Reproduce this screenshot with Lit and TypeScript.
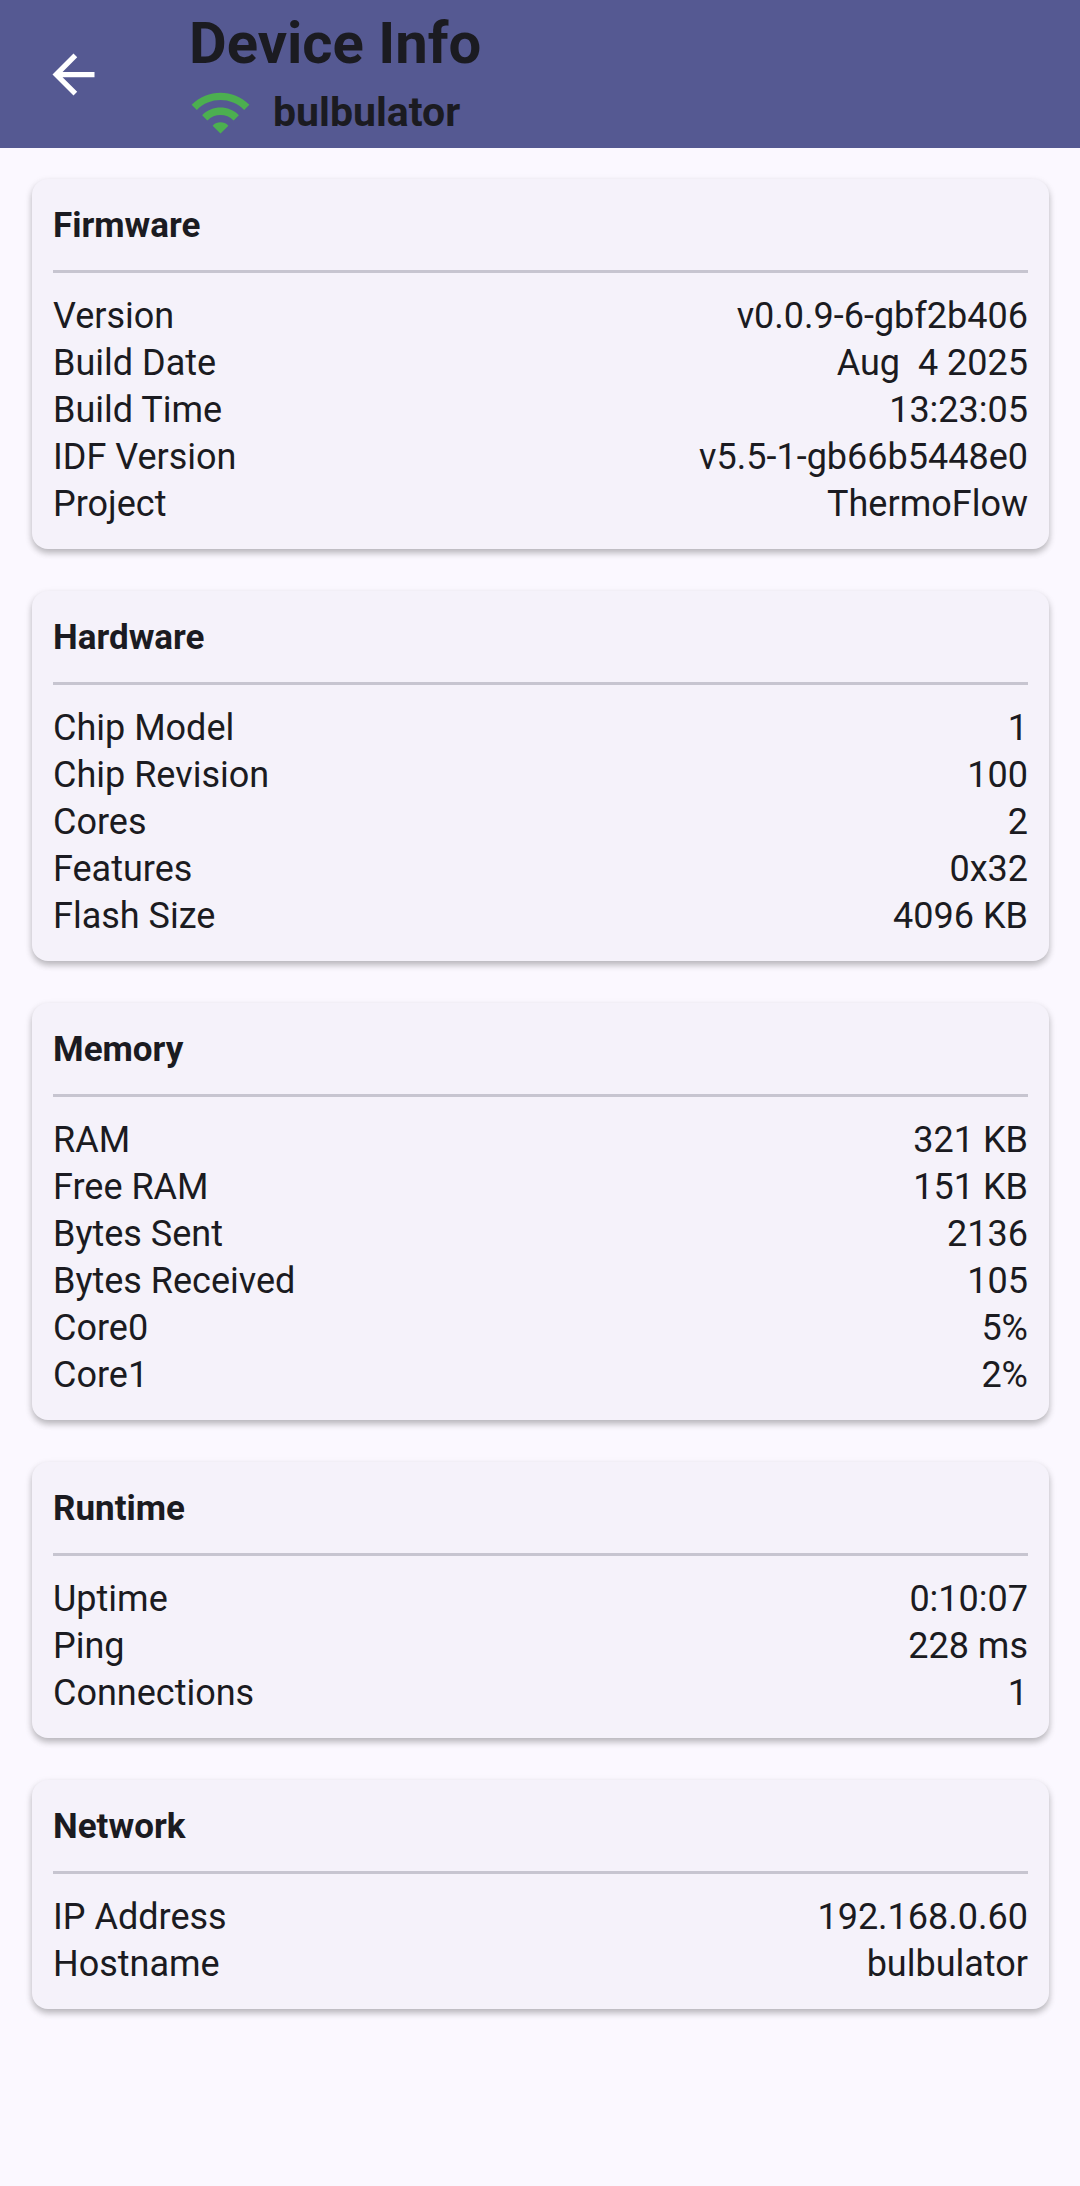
import { LitElement, html, css } from "lit";
import { customElement, property } from "lit/decorators.js";

interface InfoRow {
  label: string;
  value: string;
}

interface InfoSection {
  title: string;
  rows: InfoRow[];
}

const sections: InfoSection[] = [
  {
    title: "Firmware",
    rows: [
      { label: "Version", value: "v0.0.9-6-gbf2b406" },
      { label: "Build Date", value: "Aug  4 2025" },
      { label: "Build Time", value: "13:23:05" },
      { label: "IDF Version", value: "v5.5-1-gb66b5448e0" },
      { label: "Project", value: "ThermoFlow" },
    ],
  },
  {
    title: "Hardware",
    rows: [
      { label: "Chip Model", value: "1" },
      { label: "Chip Revision", value: "100" },
      { label: "Cores", value: "2" },
      { label: "Features", value: "0x32" },
      { label: "Flash Size", value: "4096 KB" },
    ],
  },
  {
    title: "Memory",
    rows: [
      { label: "RAM", value: "321 KB" },
      { label: "Free RAM", value: "151 KB" },
      { label: "Bytes Sent", value: "2136" },
      { label: "Bytes Received", value: "105" },
      { label: "Core0", value: "5%" },
      { label: "Core1", value: "2%" },
    ],
  },
  {
    title: "Runtime",
    rows: [
      { label: "Uptime", value: "0:10:07" },
      { label: "Ping", value: "228 ms" },
      { label: "Connections", value: "1" },
    ],
  },
  {
    title: "Network",
    rows: [
      { label: "IP Address", value: "192.168.0.60" },
      { label: "Hostname", value: "bulbulator" },
    ],
  },
];

@customElement("info-card")
export class InfoCard extends LitElement {
  @property({ attribute: false }) section!: InfoSection;

  static styles = css`
    :host {
      display: block;
    }
    .card {
      padding: 23px 21px 21px;
      border-radius: 16px;
      background: #f5f2fa;
      box-shadow:
        0 4px 6px rgba(0, 0, 0, 0.2),
        0 3px 8px rgba(0, 0, 0, 0.1);
    }
    .title {
      margin: 0;
      padding-bottom: 21px;
      border-bottom: 3px solid #c7c5d0;
      font-size: 35px;
      font-weight: 700;
      line-height: 47px;
    }
    .rows {
      margin: 20px 0 0;
    }
    .row {
      display: flex;
      justify-content: space-between;
      gap: 21px;
      font-size: 36px;
      line-height: 47px;
    }
    .value {
      margin: 0;
      text-align: right;
      white-space: pre-wrap;
    }
  `;

  render() {
    return html`
      <section class="card">
        <h2 class="title">${this.section.title}</h2>
        <dl class="rows">
          ${this.section.rows.map(
            (row) => html`<div class="row"><dt>${row.label}</dt><dd class="value">${row.value}</dd></div>`
          )}
        </dl>
      </section>
    `;
  }
}

@customElement("app-root")
export class AppRoot extends LitElement {
  static styles = css`
    :host {
      display: block;
      min-height: 100vh;
      background: #fbf8ff;
      color: #1b1b21;
      font-family: Roboto, "Noto Sans", sans-serif;
    }
    .bar {
      display: flex;
      align-items: center;
      gap: 63px;
      padding: 5px 21px 4px;
      background: #555992;
    }
    .back {
      display: flex;
      padding: 21px;
      border: 0;
      background: none;
      color: #ffffff;
      cursor: pointer;
    }
    .icon {
      display: block;
      width: 63px;
      height: 63px;
      fill: currentColor;
    }
    .heading {
      margin: 0;
      font-size: 58px;
      font-weight: 700;
      line-height: 76px;
    }
    .device {
      display: flex;
      align-items: center;
      gap: 21px;
      font-size: 41px;
      font-weight: 700;
      line-height: 63px;
    }
    .signal {
      color: #4caf50;
    }
    .cards {
      display: flex;
      flex-direction: column;
      gap: 42px;
      padding: 31px 31px 42px 32px;
    }
  `;

  render() {
    return html`
      <header class="bar">
        <button class="back" type="button" aria-label="Back">
          <svg class="icon" viewBox="0 0 24 24" aria-hidden="true">
            <path d="M20 11H7.83l5.59-5.59L12 4l-8 8 8 8 1.41-1.41L7.83 13H20v-2z" />
          </svg>
        </button>
        <div>
          <h1 class="heading">Device Info</h1>
          <div class="device">
            <svg class="icon signal" viewBox="0 0 24 24" aria-hidden="true">
              <path
                d="M1 9l2 2c4.97-4.97 13.03-4.97 18 0l2-2C16.93 2.93 7.08 2.93 1 9zm8 8l3 3 3-3c-1.65-1.66-4.34-1.66-6 0zm-4-4l2 2c2.76-2.76 7.24-2.76 10 0l2-2C15.14 9.14 8.87 9.14 5 13z"
              />
            </svg>
            <span>bulbulator</span>
          </div>
        </div>
      </header>
      <main class="cards">
        ${sections.map((section) => html`<info-card .section=${section}></info-card>`)}
      </main>
    `;
  }
}
